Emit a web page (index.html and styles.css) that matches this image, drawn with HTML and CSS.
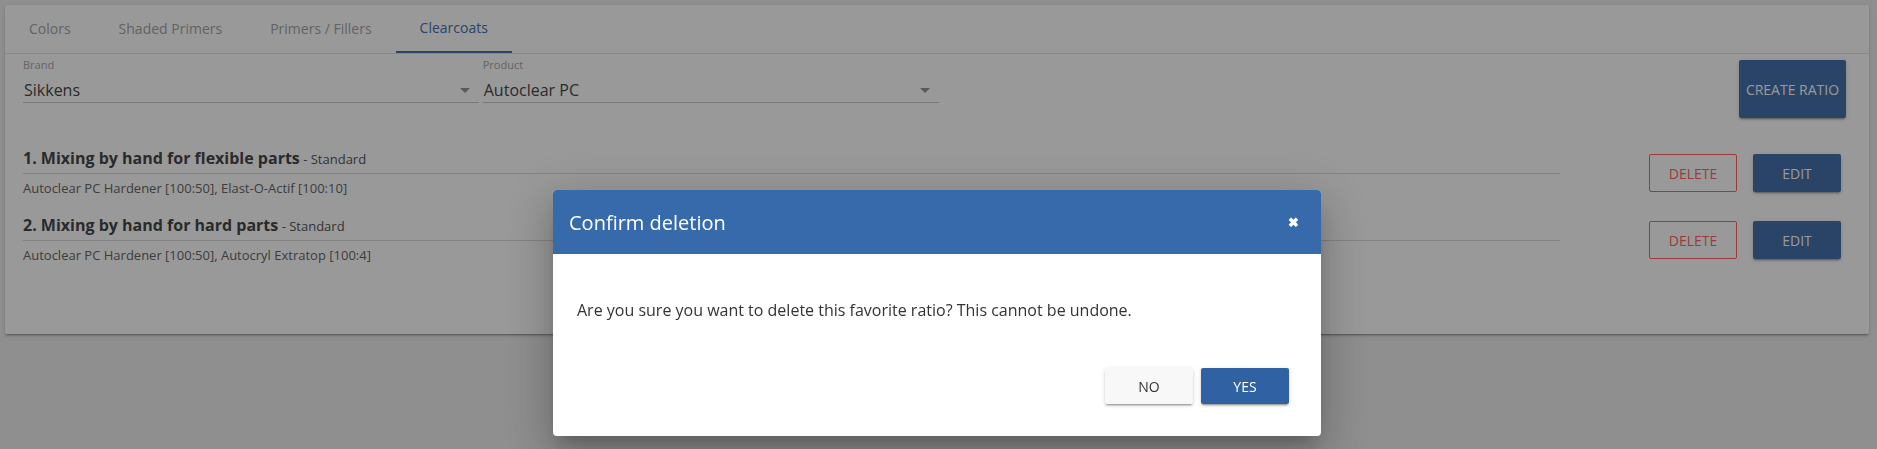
FILE: index.html
```html
<!DOCTYPE html>
<html lang="en">
<head>
  <meta charset="UTF-8">
  <title>Favorite ratios</title>
  <link rel="stylesheet" href="styles.css">
</head>
<body>

  <div class="card">
    <div class="tabs">
      <div class="tab">Colors</div>
      <div class="tab">Shaded Primers</div>
      <div class="tab">Primers / Fillers</div>
      <div class="tab active">Clearcoats</div>
    </div>

    <div class="filtros">
      <div class="campo">
        <div class="etiqueta">Brand</div>
        <div class="select"><span>Sikkens</span><span class="flecha"></span></div>
      </div>
      <div class="campo">
        <div class="etiqueta">Product</div>
        <div class="select"><span>Autoclear PC</span><span class="flecha"></span></div>
      </div>
      <button class="btn btn-azul btn-crear">Create ratio</button>
    </div>

    <div class="lista">
      <div class="ratio">
        <div class="ratio-info">
          <div class="ratio-titulo"><b>1. Mixing by hand for flexible parts</b> - Standard</div>
          <div class="ratio-detalle">Autoclear PC Hardener [100:50], Elast-O-Actif [100:10]</div>
        </div>
        <div class="acciones">
          <button class="btn btn-borrar">Delete</button>
          <button class="btn btn-azul">Edit</button>
        </div>
      </div>
      <div class="ratio">
        <div class="ratio-info">
          <div class="ratio-titulo"><b>2. Mixing by hand for hard parts</b> - Standard</div>
          <div class="ratio-detalle">Autoclear PC Hardener [100:50], Autocryl Extratop [100:4]</div>
        </div>
        <div class="acciones">
          <button class="btn btn-borrar">Delete</button>
          <button class="btn btn-azul">Edit</button>
        </div>
      </div>
    </div>
  </div>

  <div class="overlay"></div>

  <div class="modal-wrap">
    <div class="modal">
      <div class="modal-header">
        <span class="modal-titulo">Confirm deletion</span>
        <span class="cerrar">&#10006;</span>
      </div>
      <div class="modal-body">Are you sure you want to delete this favorite ratio? This cannot be undone.</div>
      <div class="modal-footer">
        <button class="btn btn-no">No</button>
        <button class="btn btn-si">Yes</button>
      </div>
    </div>
  </div>

</body>
</html>
```

FILE: styles.css
```css
body {
  font-family: 'Open Sans', 'Liberation Sans', sans-serif;
  margin: 0;
  padding: 5px 8px 0 5px;
  background-color: #ececec;
  color: #333;
  height: 449px;
  box-sizing: border-box;
  overflow: hidden;
}

.card {
  background-color: #fff;
  border-radius: 2px;
  box-shadow: 0 3px 1px -2px rgba(0,0,0,0.2), 0 2px 2px 0 rgba(0,0,0,0.14), 0 1px 5px 0 rgba(0,0,0,0.12);
  height: 329px;
  box-sizing: border-box;
}

/* pestañas */
.tabs {
  display: flex;
  height: 48px;
  border-bottom: 1px solid #e0e0e0;
}

.tab {
  padding: 0 24px;
  font-size: 14px;
  line-height: 48px;
  color: #9a9a9a;
  box-sizing: border-box;
}

.tab.active {
  color: #3062a3;
  border-bottom: 2px solid #3062a3;
  line-height: 46px;
}

/* filtros */
.filtros {
  display: flex;
  align-items: flex-start;
  gap: 4px;
  padding: 4px 23px 0 18px;
}

.campo {
  width: 25%;
  box-sizing: border-box;
}

.etiqueta {
  font-size: 11px;
  line-height: 14px;
  color: #9e9e9e;
}

.select {
  display: flex;
  align-items: center;
  justify-content: space-between;
  margin-top: 6px;
  height: 24px;
  font-size: 16px;
  color: #333;
  border-bottom: 1px solid #c4c4c4;
  padding: 0 9px 0 1px;
}

.flecha {
  width: 0;
  height: 0;
  border-left: 5px solid transparent;
  border-right: 5px solid transparent;
  border-top: 5px solid #8a8a8a;
}

.btn {
  font-family: 'Open Sans', 'Liberation Sans', sans-serif;
  font-size: 14px;
  text-transform: uppercase;
  border-radius: 2px;
  width: 88px;
  height: 38px;
  padding: 0;
  cursor: pointer;
  white-space: nowrap;
}

.btn-azul {
  background-color: #3062a3;
  color: #fff;
  border: none;
  box-shadow: 0 3px 1px -2px rgba(0,0,0,0.2), 0 2px 2px 0 rgba(0,0,0,0.14), 0 1px 5px 0 rgba(0,0,0,0.12);
}

.btn-crear {
  margin-left: auto;
  margin-top: 2px;
  width: 107px;
  height: 58px;
}

.btn-borrar {
  background-color: transparent;
  color: #ff5252;
  border: 1px solid #ff5252;
}

/* lista de ratios */
.lista {
  padding: 28px 28px 0 18px;
}

.ratio {
  display: flex;
  align-items: center;
  margin-bottom: 16px;
}

.ratio-info {
  flex: 1;
}

.ratio-titulo {
  height: 24px;
  font-size: 13px;
  line-height: 24px;
  padding-bottom: 3px;
  border-bottom: 1px solid #d6d6d6;
  color: #444;
}

.ratio-titulo b {
  font-size: 16px;
  color: #333;
}

.ratio-detalle {
  margin-top: 5px;
  font-size: 13px;
  line-height: 18px;
  color: #555;
}

.acciones {
  display: flex;
  gap: 16px;
  margin-left: 89px;
  margin-top: 3px;
}

/* modal */
.overlay {
  position: fixed;
  top: 0;
  left: 0;
  right: 0;
  bottom: 0;
  background-color: rgba(33,33,33,0.46);
}

.modal-wrap {
  position: fixed;
  top: 0;
  left: 0;
  right: 0;
  bottom: 0;
  display: flex;
  justify-content: center;
  align-items: flex-start;
  padding: 190px 3px 0 0;
}

.modal {
  width: 768px;
  background-color: #fff;
  border-radius: 4px;
  overflow: hidden;
  box-shadow: 0 11px 15px -7px rgba(0,0,0,0.2), 0 24px 38px 3px rgba(0,0,0,0.14), 0 9px 46px 8px rgba(0,0,0,0.12);
}

.modal-header {
  display: flex;
  align-items: center;
  justify-content: space-between;
  height: 64px;
  padding: 0 22px 0 16px;
  background-color: #376aab;
  color: #fff;
}

.modal-titulo {
  font-size: 20px;
}

.cerrar {
  font-size: 13px;
  font-weight: bold;
}

.modal-body {
  padding: 45px 24px 0;
  font-size: 16px;
  line-height: 22px;
  color: #333;
}

.modal-footer {
  display: flex;
  justify-content: flex-end;
  gap: 8px;
  margin-top: 47px;
  padding: 0 32px 32px;
}

.btn-no,
.btn-si {
  height: 36px;
  border: none;
  box-shadow: 0 3px 1px -2px rgba(0,0,0,0.2), 0 2px 2px 0 rgba(0,0,0,0.14), 0 1px 5px 0 rgba(0,0,0,0.12);
}

.btn-no {
  background-color: #f8f8f8;
  color: #333;
}

.btn-si {
  background-color: #3062a3;
  color: #fff;
}
```
